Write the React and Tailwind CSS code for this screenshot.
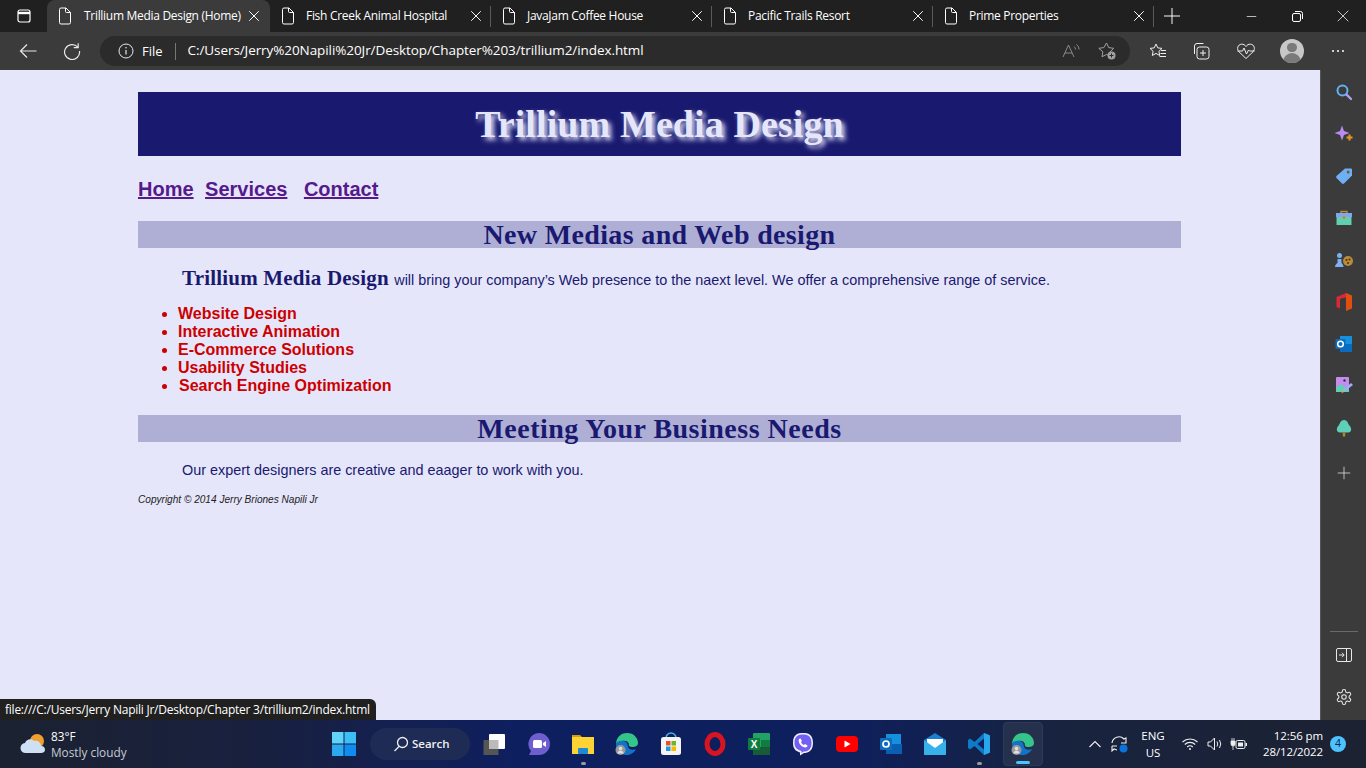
import { Plus, X, Minus } from "lucide-react"

const uiFont = "font-['Open_Sans','Noto_Sans',sans-serif]"

function PageIcon() {
  return (
    <svg width="16" height="18" viewBox="0 0 16 18" fill="none" stroke="#fff" strokeWidth="1" className="shrink-0">
      <path d="M2.5 2.500a1.500 1.500 0 0 1 1.500-1.500h5l4.500 4.500v10a1.500 1.500 0 0 1-1.500 1.500H4a1.500 1.500 0 0 1-1.500-1.500z" />
      <path d="M8.500 1v3.500a1 1 0 0 0 1 1h4" />
    </svg>
  )
}

function Tab({ title, active }) {
  return (
    <div className={`flex items-center h-[32px] shrink-0 ${active ? "w-[223px] pl-[10px] pr-[7px] bg-[#3b3b3b] rounded-t-lg" : "w-[220px] pl-[10px] pr-[5px]"}`}>
      <PageIcon />
      <span className={`text-[12px] leading-none text-white flex-1 whitespace-nowrap tracking-[-0.3px] ${active ? "ml-[11px]" : "ml-[10px]"}`}>{title}</span>
      <X size={18} color="#fff" strokeWidth={1.3} className="shrink-0" />
    </div>
  )
}

function Sep() {
  return <div className="w-px h-[21px] bg-[#5a5a5a] shrink-0" />
}

function TopBar() {
  return (
    <div className={`${uiFont} h-[32px] bg-[#202020] flex items-center shrink-0`}>
      <div className="w-[47px] h-[32px] flex items-center justify-center shrink-0">
        <svg width="16" height="16" viewBox="0 0 16 16" fill="none" stroke="#fff" strokeWidth="1.2">
          <rect x="2" y="2" width="12" height="12" rx="2" />
          <path d="M2 5h12" strokeWidth="2.4" />
        </svg>
      </div>
      <Tab title="Trillium Media Design (Home)" active />
      <Tab title="Fish Creek Animal Hospital" />
      <Sep />
      <Tab title="JavaJam Coffee House" />
      <Sep />
      <Tab title="Pacific Trails Resort" />
      <Sep />
      <Tab title="Prime Properties" />
      <Sep />
      <div className="w-[36px] h-[28px] flex items-center justify-center shrink-0">
        <Plus size={26} color="#fff" strokeWidth={0.9} />
      </div>
      <div className="flex-1" />
      <div className="flex h-[31px] items-center">
        <div className="w-[46px] flex justify-center"><Minus size={15} color="#fff" strokeWidth={1.1} /></div>
        <div className="w-[46px] flex justify-center">
          <svg width="11" height="11" viewBox="0 0 11 11" fill="none" stroke="#fff" strokeWidth="1">
            <rect x="0.5" y="2.5" width="8" height="8" rx="1.5" />
            <path d="M3 .5h5.5a2 2 0 0 1 2 2V8" />
          </svg>
        </div>
        <div className="w-[46px] flex justify-center"><X size={20} color="#fff" strokeWidth={0.9} /></div>
      </div>
    </div>
  )
}

function ToolBar() {
  return (
    <div className={`${uiFont} h-[38px] bg-[#3b3b3b] flex items-center shrink-0 relative`}>
      <div className="w-[56px] flex justify-center">
        <svg width="18" height="16" viewBox="0 0 18 16" fill="none" stroke="#e8e8e8" strokeWidth="1.2">
          <path d="M1.5 8h16M8 1.5 1.5 8 8 14.5" />
        </svg>
      </div>
      <div className="w-[32px] flex justify-center">
        <svg width="18" height="18" viewBox="0 0 18 18" fill="none" stroke="#e8e8e8" strokeWidth="1.2">
          <path d="M14.8 5.2A7.5 7.5 0 1 0 16.5 9" />
          <path d="M15.2 1.2v4.4h-4.4" />
        </svg>
      </div>
      <div className="w-[1030px] ml-[12px] h-[30px] rounded-full bg-[#2b2b2b] flex items-center shrink-0">
        <svg width="16" height="16" viewBox="0 0 16 16" fill="none" stroke="#e8e8e8" strokeWidth="1" className="ml-[18px]">
          <circle cx="8" cy="8" r="7" />
          <path d="M8 7v4.5" strokeWidth="1.2" />
          <circle cx="8" cy="4.8" r=".8" fill="#e8e8e8" stroke="none" />
        </svg>
        <span className="ml-[8px] text-[13px] text-white leading-none">File</span>
        <div className="ml-[12px] w-px h-[17px] bg-[#777]" />
        <span className="ml-[12px] text-[13.5px] text-white leading-none tracking-[-0.08px]">C:/Users/Jerry%20Napili%20Jr/Desktop/Chapter%203/trillium2/index.html</span>
        <div className="flex-1" />
        <svg width="18" height="16" viewBox="0 0 18 16" fill="none" stroke="#8a8a8a" strokeWidth="1">
          <path d="M1 14 6.5 2 12 14M3 10h7" />
          <path d="M12 3.5q1.6 1.2 1.6 3M14.5 1.5q2.6 2 2.6 5" />
        </svg>
        <svg width="20" height="20" viewBox="0 0 20 20" fill="none" stroke="#a0a0a0" strokeWidth="1" className="ml-[17px] mr-[13px]">
          <path d="M9.5 2l2.2 4.6 5 .7-3.6 3.5.9 5-4.5-2.4-4.5 2.4.9-5L1.8 7.3l5-.7z" />
          <circle cx="14.5" cy="14.5" r="4" fill="#a0a0a0" stroke="none" />
          <path d="M14.5 12.5v4M12.5 14.5h4" stroke="#2b2b2b" />
        </svg>
      </div>
      <div className="w-[19px] shrink-0" />
      <svg width="18" height="18" viewBox="0 0 18 18" fill="none" stroke="#f0f0f0" strokeWidth="1" className="shrink-0">
        <path d="M7 2l1.8 3.9 4.2.5-3.1 2.9.8 4.2L7 11.4l-3.7 2.1.8-4.2L1 6.4l4.2-.5z" />
        <path d="M12 8.5h5M11.5 11.5h5.5M10.5 14.5h6.5" />
      </svg>
      <svg width="20" height="20" viewBox="0 0 20 20" fill="none" stroke="#f0f0f0" strokeWidth="1" className="shrink-0 ml-[24px]">
        <rect x="6" y="6" width="12" height="12" rx="2.5" />
        <path d="M12 9v6M9 12h6" />
        <path d="M3.5 13V5a2.5 2.5 0 0 1 2.5-2.5h6.5" />
      </svg>
      <svg width="20" height="18" viewBox="0 0 20 18" fill="none" stroke="#f0f0f0" strokeWidth="1" className="shrink-0 ml-[25px]">
        <path d="M10 16.5 3 9.8C.5 7.2 1.5 2.5 5.5 2.2 7.5 2 9 3 10 4.5 11 3 12.5 2 14.5 2.2c4 .3 5 5 2.5 7.6z" />
        <path d="M1.5 9h5l1.5-3 2.5 6 2-4 1 1h5" />
      </svg>
      <div className="ml-[24px] w-[24px] h-[24px] rounded-full bg-[#c8c8c8] overflow-hidden flex flex-col items-center shrink-0">
        <div className="w-[10px] h-[11px] mt-[4px] rounded-full bg-[#7a7a7a]" />
        <div className="w-[18px] h-[12px] mt-[1px] rounded-t-full bg-[#7a7a7a]" />
      </div>
      <div className="ml-[28px] flex gap-[3px] shrink-0">
        <div className="w-[2px] h-[2px] bg-white rounded-full" />
        <div className="w-[2px] h-[2px] bg-white rounded-full" />
        <div className="w-[2px] h-[2px] bg-white rounded-full" />
      </div>
    </div>
  )
}

function Content() {
  const services = ["Website Design", "Interactive Animation", "E-Commerce Solutions", "Usability Studies"]
  return (
    <div className="flex-1 bg-[#e6e6fa] font-['Liberation_Sans',Arial,sans-serif] text-[#191970] pt-[22px] pl-[138px] pr-[139px]">
      <div className="h-[64px] bg-[#191970] flex items-center justify-center">
        <h1 className="font-['Liberation_Serif',serif] font-bold text-[38px] leading-none text-[#e6e6fa] [text-shadow:3px_3px_5px_#e6e6fa] tracking-[0.1px]">
          Trillium Media Design
        </h1>
      </div>
      <nav className="mt-[21px] h-[24px] flex items-center text-[20px] font-bold leading-none text-[#551a8b]">
        <a className="underline">Home</a>
        <a className="underline ml-[11.5px]">Services</a>
        <a className="underline ml-[16.5px]">Contact</a>
      </nav>
      <div className="mt-[20px] h-[27px] bg-[#afafd6] flex items-center justify-center">
        <h2 className="font-['Liberation_Serif',serif] font-bold text-[28px] leading-none tracking-[0.35px]">New Medias and Web design</h2>
      </div>
      <p className="mt-[18px] h-[24px] pl-[44px] flex items-baseline text-[14.4px] leading-[24px]">
        <span className="font-['Liberation_Serif',serif] font-bold text-[21px] tracking-[0.2px] whitespace-pre">Trillium Media Design </span>
        <span>will bring your company’s Web presence to the naext level. We offer a comprehensive range of service.</span>
      </p>
      <ul className="mt-[15px] pl-[40px] list-disc text-[16px] font-bold leading-[18px] text-[#cc0000] marker:text-[#cc0000]">
        {services.map((s) => (
          <li key={s}>{s}</li>
        ))}
        <li className="pl-px">Search Engine Optimization</li>
      </ul>
      <div className="mt-[20px] h-[27px] bg-[#afafd6] flex items-center justify-center">
        <h2 className="font-['Liberation_Serif',serif] font-bold text-[28px] leading-none tracking-[0.5px]">Meeting Your Business Needs</h2>
      </div>
      <p className="mt-[18px] h-[20px] pl-[44px] text-[14.4px] leading-[20px]">Our expert designers are creative and eaager to work with you.</p>
      <p className="mt-[14px] italic text-[10.08px] leading-[12px] text-[#222]">Copyright © 2014 Jerry Briones Napili Jr</p>
    </div>
  )
}

function SideIcon({ children, h = 42 }) {
  return <div className="flex items-center justify-center shrink-0" style={{ height: h }}>{children}</div>
}

function SideBar() {
  return (
    <div className="w-[46px] bg-[#3b3b3b] border-l border-[#555] flex flex-col items-center pt-[1px] pb-[4px] shrink-0">
      <SideIcon>
        <svg width="18" height="18" viewBox="0 0 18 18" fill="none">
          <circle cx="7.5" cy="7.5" r="5" stroke="#62b0f5" strokeWidth="2" />
          <path d="M11.5 11.5 16 16" stroke="#b59cf0" strokeWidth="2.4" strokeLinecap="round" />
        </svg>
      </SideIcon>
      <SideIcon>
        <svg width="20" height="20" viewBox="0 0 20 20">
          <path d="M8 1.5 10 7l5.5 2L10 11l-2 5.5L6 11 .5 9 6 7z" fill="#b98cf0" />
          <path d="M15.5 10.5v6M12.5 13.5h6" stroke="#e59a22" strokeWidth="2" />
        </svg>
      </SideIcon>
      <SideIcon>
        <svg width="18" height="18" viewBox="0 0 18 18">
          <path d="M10 1.5h6a1 1 0 0 1 1 1v6L9 16.500a1.500 1.500 0 0 1-2 0l-5.500-5.500a1.500 1.500 0 0 1 0-2z" fill="#6fb0f5" />
          <circle cx="13.2" cy="5" r="1.5" fill="#7a5a20" />
        </svg>
      </SideIcon>
      <SideIcon>
        <svg width="18" height="18" viewBox="0 0 18 18">
          <path d="M6 4V2.5h6V4" fill="none" stroke="#b8903a" strokeWidth="1.4" />
          <rect x="1" y="4" width="16" height="4" fill="#7fa6ee" />
          <rect x="1.5" y="8" width="15" height="8" fill="#5fd0b0" />
          <circle cx="9" cy="8.5" r="1.5" fill="#c98a20" />
        </svg>
      </SideIcon>
      <SideIcon>
        <svg width="20" height="18" viewBox="0 0 20 18">
          <circle cx="5.5" cy="4.5" r="2.5" fill="#7fb0f0" />
          <path d="M1 16c0-2 1-3 2.5-4V8h4v4c1 1 2 2 2 4z" fill="#7fb0f0" />
          <circle cx="14" cy="10" r="5" fill="#b98a3a" />
          <circle cx="12.5" cy="9" r="1" fill="#4a3010" />
          <circle cx="15.5" cy="8.5" r="1" fill="#4a3010" />
          <circle cx="14" cy="12" r="1" fill="#4a3010" />
        </svg>
      </SideIcon>
      <SideIcon>
        <svg width="18" height="20" viewBox="0 0 18 20">
          <path d="M11 1 17 3.5v13L11 19z" fill="#e04e10" />
          <path d="M11 1 1.5 5v10L11 19l-6-2.500V7l6-1.500z" fill="#d8283a" />
          <path d="M11 5.500 5.500 7v8.500l5.500 3z" fill="#3b3b3b" />
        </svg>
      </SideIcon>
      <SideIcon>
        <svg width="18" height="18" viewBox="0 0 18 18">
          <rect x="5" y="1" width="12" height="9" fill="#1490df" />
          <rect x="5" y="9" width="12" height="8" fill="#0a6cc0" />
          <rect x="0.5" y="4" width="10" height="10" rx="1" fill="#0f6cbd" />
          <circle cx="5.5" cy="9" r="2.8" fill="none" stroke="#fff" strokeWidth="1.5" />
        </svg>
      </SideIcon>
      <SideIcon>
        <svg width="20" height="20" viewBox="0 0 20 20">
          <rect x="2" y="1" width="13" height="15" rx="1" fill="#c58cf0" />
          <path d="M2 12 7 8l8 6v2H2z" fill="#5fd0b0" />
          <circle cx="10.5" cy="4.5" r="1.2" fill="#333" />
          <path d="M8 15 17 7l2 2-9 7z" fill="#9bb0f5" />
          <path d="M8 15l2 1-2.5 1.500z" fill="#d89a20" />
        </svg>
      </SideIcon>
      <SideIcon>
        <svg width="16" height="18" viewBox="0 0 16 18">
          <path d="M8 1C5 1 4 4 3 6 1 8 .5 10 1 11.500c.5 1.500 2 2 3.500 2h7c1.500 0 3-.5 3.500-2 .5-1.500 0-3.500-2-5.500-1-2-2-5-5-5z" fill="#5fd0b8" />
          <rect x="6.8" y="13.5" width="2.4" height="4" fill="#b8862a" />
        </svg>
      </SideIcon>
      <SideIcon h={48}>
        <Plus size={20} color="#d8d8d8" strokeWidth={1} />
      </SideIcon>
      <div className="flex-1" />
      <div className="w-[28px] h-px bg-[#6a6a6a]" />
      <SideIcon h={46}>
        <svg width="16" height="14" viewBox="0 0 16 14" fill="none" stroke="#e8e8e8" strokeWidth="1">
          <rect x=".5" y=".5" width="15" height="13" rx="1.5" />
          <path d="M10.5 .5v13" />
          <path d="M3 7h5M6 4.800 8.200 7 6 9.200" />
        </svg>
      </SideIcon>
      <SideIcon h={38}>
        <svg width="18" height="18" viewBox="0 0 24 24" fill="none" stroke="#e8e8e8" strokeWidth="1.4">
          <path d="M12.2 2h-.4a2 2 0 0 0-2 2v.2a2 2 0 0 1-1 1.700l-.4.300a2 2 0 0 1-2 0l-.2-.1a2 2 0 0 0-2.700.7l-.2.4a2 2 0 0 0 .7 2.700l.2.1a2 2 0 0 1 1 1.700v.5a2 2 0 0 1-1 1.700l-.2.1a2 2 0 0 0-.7 2.700l.2.4a2 2 0 0 0 2.700.7l.2-.1a2 2 0 0 1 2 0l.4.300a2 2 0 0 1 1 1.700v.2a2 2 0 0 0 2 2h.4a2 2 0 0 0 2-2v-.2a2 2 0 0 1 1-1.700l.4-.3a2 2 0 0 1 2 0l.2.1a2 2 0 0 0 2.700-.7l.2-.4a2 2 0 0 0-.7-2.700l-.2-.1a2 2 0 0 1-1-1.700v-.5a2 2 0 0 1 1-1.700l.2-.1a2 2 0 0 0 .7-2.700l-.2-.4a2 2 0 0 0-2.700-.7l-.2.1a2 2 0 0 1-2 0l-.4-.3a2 2 0 0 1-1-1.700V4a2 2 0 0 0-2-2z" />
          <circle cx="12" cy="12" r="3" />
        </svg>
      </SideIcon>
    </div>
  )
}

function EdgeIcon() {
  return (
    <svg width="24" height="24" viewBox="0 0 24 24">
      <path d="M1 11C2 4 7 1 12 1c7 0 11 5 11 10 0 3-3 4-5.500 4S13 14 14 12c-1-3-4-4-7-3-3 1-5 3-6 2z" fill="#35c58a" />
      <path d="M1 11c3-3 9-3 11 0 1 2 .5 4 2 5.500 2 1.500 5 1.500 7 .5-2 4-6 6-9.500 6C5 23 .5 17 1 11z" fill="#1373c8" />
      <circle cx="5.5" cy="18" r="5" fill="#9a9a9a" />
      <circle cx="5.5" cy="16.5" r="1.8" fill="#e0e0e0" />
      <path d="M2.3 21.500c.5-2 1.500-3 3.200-3s2.700 1 3.200 3z" fill="#e0e0e0" />
    </svg>
  )
}

function Slot({ children, dot, w = 44 }) {
  return (
    <div className="h-[48px] flex items-center justify-center shrink-0 relative" style={{ width: w }}>
      {children}
      {dot && <div className="absolute bottom-[3px] w-[5px] h-[3px] rounded-full bg-[#9a9a9a]" />}
    </div>
  )
}

function TaskBar() {
  return (
    <div className={`${uiFont} h-[48px] shrink-0 flex items-center bg-[linear-gradient(90deg,#1b2231_0%,#182040_20%,#0e1f60_38%,#0e1f5c_62%,#18233f_78%,#1c2231_100%)] text-white`}>
      <div className="w-[331px] flex items-center shrink-0">
        <svg width="28" height="24" viewBox="0 0 28 24" className="ml-[19px] shrink-0">
          <circle cx="18" cy="9" r="7" fill="#f0a030" />
          <path d="M7 21a5 5 0 0 1-1-10c1-4 7-5 9-2 3-1 7 1 7 5 3 0 4 2 4 4s-2 3-4 3z" fill="#cfe0f5" />
        </svg>
        <div className="ml-[4px] flex flex-col">
          <span className="text-[11.8px] leading-[15px] h-[16px]">83°F</span>
          <span className="text-[11.8px] leading-[15px] text-[#c8ccd4]">Mostly cloudy</span>
        </div>
      </div>
      <svg width="26" height="26" viewBox="0 0 26 26" className="shrink-0">
        <rect x="1" y="1" width="11.5" height="11.5" fill="#5fd4f8" />
        <rect x="13.5" y="1" width="11.5" height="11.5" fill="#3ac0f5" />
        <rect x="1" y="13.5" width="11.5" height="11.5" fill="#2aa8f0" />
        <rect x="13.5" y="13.5" width="11.5" height="11.5" fill="#0f8cf0" />
      </svg>
      <div className="ml-[13px] w-[100px] h-[32px] rounded-full bg-[#1d2b55] flex items-center shrink-0">
        <svg width="16" height="16" viewBox="0 0 16 16" fill="none" stroke="#f0f0f0" strokeWidth="1.3" className="ml-[23px]">
          <circle cx="9.5" cy="6.5" r="5" />
          <path d="M6 10.500 1.500 15" />
        </svg>
        <span className="ml-[3px] text-[11.5px] font-semibold text-[#f0f0f0]">Search</span>
      </div>
      <div className="w-[3px] shrink-0" />
      <Slot>
        <svg width="24" height="22" viewBox="0 0 24 22">
          <rect x="0.5" y="7" width="15" height="15" fill="#555" />
          <rect x="6" y="1" width="16" height="15" rx="1" fill="#fff" />
          <rect x="6" y="7" width="9.5" height="9" fill="#bbb" />
        </svg>
      </Slot>
      <Slot>
        <svg width="24" height="24" viewBox="0 0 24 24">
          <path d="M12 1a11 11 0 0 1 0 22H2l2-4A11 11 0 0 1 12 1z" fill="#6f5ed0" />
          <rect x="6" y="8" width="9" height="8" rx="1.5" fill="#fff" />
          <path d="M16 11l3-2v6l-3-2z" fill="#fff" />
        </svg>
      </Slot>
      <Slot dot>
        <svg width="24" height="22" viewBox="0 0 24 22">
          <path d="M1 2h8l2 2h-10z" fill="#d89a10" />
          <rect x="1" y="4" width="22" height="17" fill="#fcd235" />
          <rect x="7" y="15" width="10" height="6" rx="1" fill="#1a8ad8" />
        </svg>
      </Slot>
      <Slot><EdgeIcon /></Slot>
      <Slot>
        <svg width="22" height="24" viewBox="0 0 22 24">
          <path d="M6 6a5 5 0 0 1 10 0" fill="none" stroke="#45b5e8" strokeWidth="1.5" />
          <rect x="1" y="5" width="20" height="18" rx="2.5" fill="#f4f4f4" />
          <rect x="6" y="9" width="4.5" height="4.5" fill="#e8502a" />
          <rect x="11.5" y="9" width="4.5" height="4.5" fill="#6ab82a" />
          <rect x="6" y="14.5" width="4.5" height="4.5" fill="#1a9ae0" />
          <rect x="11.5" y="14.5" width="4.5" height="4.5" fill="#f8b800" />
        </svg>
      </Slot>
      <Slot>
        <svg width="24" height="24" viewBox="0 0 24 24">
          <ellipse cx="12" cy="12" rx="8" ry="9.5" fill="none" stroke="#d81420" strokeWidth="5" />
        </svg>
      </Slot>
      <Slot>
        <svg width="24" height="24" viewBox="0 0 24 24">
          <rect x="6" y="1" width="17" height="22" rx="1" fill="#21a366" />
          <rect x="14" y="8" width="9" height="7" fill="#107c41" />
          <rect x="6" y="15" width="17" height="8" fill="#185c37" />
          <rect x="1" y="6" width="12" height="12" rx="1" fill="#107c41" />
          <text x="7" y="15.5" textAnchor="middle" fontSize="10" fontWeight="700" fill="#fff" fontFamily="Liberation Sans">X</text>
        </svg>
      </Slot>
      <Slot>
        <svg width="24" height="24" viewBox="0 0 24 24">
          <path d="M12 1c5 0 10 1 10 10 0 8-5 10-9 10l-4 2.500V20.500C4 19 2 16 2 11 2 2 7 1 12 1z" fill="#f0eefc" />
          <path d="M12 2.500c4 0 8.500 1 8.500 8.500 0 7-4.500 8.500-8 8.500l-2 1.500v-2C6 17.500 3.500 15.500 3.500 11 3.500 3.500 8 2.500 12 2.500z" fill="#7360f2" />
          <path d="M8 7l1.500-.5 1.500 2.500-1 1c.5 1.500 1.500 2.500 3 3l1-1 2.500 1.500-.5 1.500c-2 1-4.500 0-6-1.500S7 9 8 7z" fill="#fff" />
        </svg>
      </Slot>
      <Slot>
        <svg width="22" height="16" viewBox="0 0 22 16">
          <rect width="22" height="16" rx="4" fill="#f00" />
          <path d="M8.500 4.500v7l6-3.500z" fill="#fff" />
        </svg>
      </Slot>
      <Slot>
        <svg width="24" height="22" viewBox="0 0 24 22">
          <rect x="7" y="1" width="15" height="10" fill="#1490df" />
          <rect x="7" y="11" width="16" height="10" fill="#0a5fb0" />
          <rect x="1" y="5" width="12" height="12" rx="1" fill="#0f6cbd" />
          <circle cx="7" cy="11" r="3" fill="none" stroke="#fff" strokeWidth="1.7" />
        </svg>
      </Slot>
      <Slot>
        <svg width="24" height="24" viewBox="0 0 24 24">
          <path d="M1 8 12 1l11 7v14a1 1 0 0 1-1 1H2a1 1 0 0 1-1-1z" fill="#1a7fd0" />
          <path d="M4 7h16v5l-8 5-8-5z" fill="#fff" />
          <path d="M1 8l11 8 11-8v14a1 1 0 0 1-1 1H2a1 1 0 0 1-1-1z" fill="#38b0ea" />
        </svg>
      </Slot>
      <Slot dot>
        <svg width="24" height="24" viewBox="0 0 24 24">
          <path d="M17 1 7.500 10 3 6.500 1 8v8l2 1.500L7.500 14l9.500 9 6-2.500v-17z" fill="#0e7bc8" />
          <path d="M17 6.500 10.500 12l6.500 5.500z" fill="#0f1f60" />
          <path d="M17 1l6 2.500v17L17 23z" fill="#28a8ea" />
        </svg>
      </Slot>
      <div className="w-[40px] h-[44px] ml-[2px] rounded bg-[#25304d] border border-[#2f3a58] flex items-center justify-center relative shrink-0">
        <EdgeIcon />
        <div className="absolute bottom-[1px] w-[14px] h-[3px] rounded-full bg-[#4cc2ff]" />
      </div>
      <div className="flex-1" />
      <svg width="12" height="8" viewBox="0 0 12 8" fill="none" stroke="#f0f0f0" strokeWidth="1.1" className="shrink-0">
        <path d="M.5 7 6 1.500 11.500 7" />
      </svg>
      <svg width="18" height="18" viewBox="0 0 18 18" fill="none" className="ml-[10px] shrink-0">
        <path d="M1 8a7 7 0 0 1 12-4l2-1v5h-5" stroke="#f0f0f0" strokeWidth="1.1" />
        <path d="M1 11v5l2-2 3 1M1 11h5" stroke="#f0f0f0" strokeWidth="1.1" />
        <circle cx="12.5" cy="13.5" r="4" fill="#0a74da" />
      </svg>
      <div className="ml-[11px] w-[26px] flex flex-col items-center text-[11.5px] leading-[17px] shrink-0">
        <span>ENG</span>
        <span>US</span>
      </div>
      <svg width="16" height="12" viewBox="0 0 16 12" fill="none" stroke="#f0f0f0" strokeWidth="1.1" className="ml-[16px] shrink-0">
        <path d="M.5 4a11 11 0 0 1 15 0M2.800 6.500a7.500 7.500 0 0 1 10.400 0M5.200 9a4 4 0 0 1 5.600 0" />
        <circle cx="8" cy="11" r="1" fill="#f0f0f0" stroke="none" />
      </svg>
      <svg width="16" height="14" viewBox="0 0 16 14" fill="none" stroke="#f0f0f0" strokeWidth="1" className="ml-[9px] shrink-0">
        <path d="M1 5h2.500L7.500 1v12L3.500 9H1z" />
        <path d="M10 4.500q1.500 2.500 0 5M12.500 3q2.500 4 0 8" />
      </svg>
      <svg width="17" height="13" viewBox="0 0 17 13" className="ml-[7px] shrink-0">
        <rect x="6" y="2.5" width="9" height="8" rx="1.5" fill="none" stroke="#f0f0f0" />
        <rect x="8" y="4.5" width="5" height="4" fill="#f0f0f0" />
        <rect x="15.5" y="5" width="1.5" height="3" fill="#f0f0f0" />
        <path d="M1 3v3a2 2 0 0 0 4 0V3zM3 8v4M2 0v3M4 0v3" fill="#f0f0f0" stroke="#f0f0f0" strokeWidth=".8" />
      </svg>
      <div className="ml-[16px] w-[60px] flex flex-col items-end text-[11.5px] leading-[16px] shrink-0 tracking-[-0.1px]">
        <span>12:56 pm</span>
        <span>28/12/2022</span>
      </div>
      <div className="ml-[7px] mr-[20px] w-[16px] h-[16px] rounded-full bg-[#4cc2ff] text-[#10233f] text-[10.5px] flex items-center justify-center shrink-0">4</div>
    </div>
  )
}

export default function App() {
  return (
    <div className="w-[1366px] h-[768px] flex flex-col overflow-hidden relative">
      <TopBar />
      <ToolBar />
      <div className="flex-1 flex min-h-0">
        <Content />
        <SideBar />
      </div>
      <TaskBar />
      {/* status bubble over the page */}
      <div className={`${uiFont} absolute left-0 top-[699px] h-[21px] pl-[5px] w-[376px] bg-[#202020] rounded-tr-md flex items-center text-[12px] text-white tracking-[-0.24px]`}>
        file:///C:/Users/Jerry Napili Jr/Desktop/Chapter 3/trillium2/index.html
      </div>
    </div>
  )
}
